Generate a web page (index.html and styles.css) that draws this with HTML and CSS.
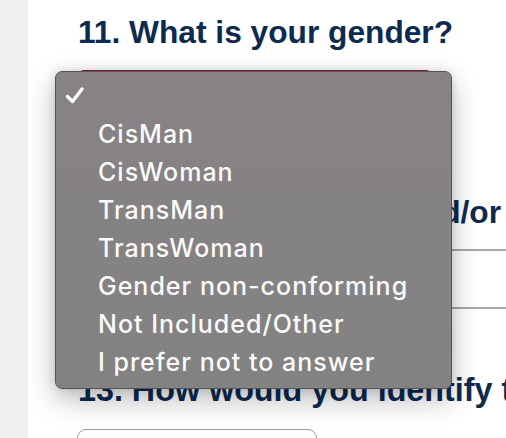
FILE: index.html
```html
<!DOCTYPE html>
<html>
<head>
<meta charset="utf-8">
<link rel="stylesheet" href="styles.css">
</head>
<body>
<div class="page">
  <aside class="rail"></aside>
  <main class="content">
    <h2 class="q q11">11. What is your gender?</h2>
    <div class="select"></div>
    <h2 class="q q12">Sexual orientation and/or</h2>
    <div class="row row-a"></div>
    <div class="row row-b"></div>
    <h2 class="q q13">13. How would you identify the following</h2>
    <div class="box"></div>
  </main>
</div>
<div class="menu">
  <div class="opt opt-check">
    <svg class="check" width="20" height="19" viewBox="0 0 20 19"><polyline points="2.5,10.5 7.5,15.5 17,3" fill="none" stroke="#ffffff" stroke-width="3.4" stroke-linecap="round" stroke-linejoin="round"/></svg>
  </div>
  <div class="opt">CisMan</div>
  <div class="opt">CisWoman</div>
  <div class="opt">TransMan</div>
  <div class="opt">TransWoman</div>
  <div class="opt">Gender non-conforming</div>
  <div class="opt">Not Included/Other</div>
  <div class="opt">I prefer not to answer</div>
</div>
</body>
</html>
```
FILE: styles.css
```css
html, body {
  margin: 0;
  padding: 0;
  background: #ffffff;
  overflow: hidden;
}
.page {
  display: flex;
  width: 506px;
  height: 438px;
  overflow: hidden;
}
.rail {
  width: 28px;
  flex: none;
  background: #efefef;
}
.content {
  flex: 1;
  display: flex;
  flex-direction: column;
  padding-left: 50px;
  overflow: hidden;
}
.content > * {
  flex: none;
}
.q {
  margin: 0;
  font-family: "Liberation Sans", Arial, sans-serif;
  font-weight: bold;
  font-size: 31.7px;
  line-height: 36px;
  color: #0d2a50;
  white-space: nowrap;
}
.q11 {
  margin-top: 14px;
}
.select {
  margin-top: 20px;
  width: 356px;
  height: 44px;
  border: 1px solid #8a1d44;
  border-radius: 8px;
  margin-left: -2px;
}
.q12 {
  margin-top: 78px;
  text-align: right;
  padding-right: 5px;
}
.row {
  border-bottom: 2px solid #a8a8a8;
}
.row-a {
  height: 19px;
}
.row-b {
  height: 56px;
}
.q13 {
  margin-top: 63px;
  font-size: 32.3px;
}
.box {
  margin-top: 21px;
  width: 238px;
  height: 40px;
  border: 1px solid #9c9c9c;
  border-radius: 9px;
  margin-left: -1px;
}
.menu {
  position: absolute;
  left: 55px;
  top: 71px;
  width: 395px;
  padding: 5px 0 7px;
  border: 1px solid #555555;
  border-radius: 7px;
  background: linear-gradient(#878285, #838283);
  box-shadow: 0 10px 28px rgba(0, 0, 0, 0.28), 0 0 8px rgba(0, 0, 0, 0.12);
}
.opt {
  height: 38px;
  line-height: 38px;
  padding-left: 42px;
  font-family: Inter, "Noto Sans", sans-serif;
  font-size: 25px;
  font-weight: 500;
  letter-spacing: 1px;
  color: #fafafa;
  white-space: nowrap;
}
.opt-check {
  position: relative;
}
.check {
  position: absolute;
  left: 9px;
  top: 9px;
}
```
